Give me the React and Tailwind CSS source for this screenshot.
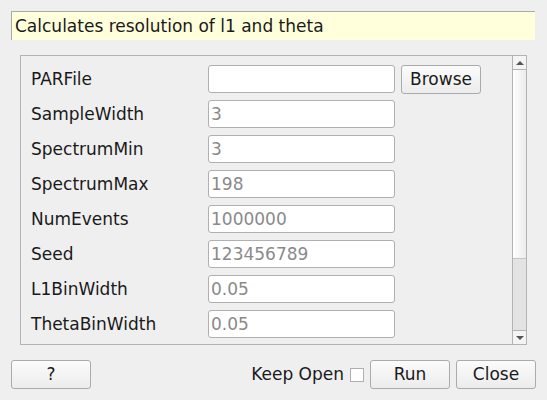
import React from "react";

const rows = [
  ["PARFile", "", true],
  ["SampleWidth", "3"],
  ["SpectrumMin", "3"],
  ["SpectrumMax", "198"],
  ["NumEvents", "1000000"],
  ["Seed", "123456789"],
  ["L1BinWidth", "0.05"],
  ["ThetaBinWidth", "0.05"],
];

function Btn({ children, className = "" }) {
  return (
    <div
      className={
        "flex h-[29px] w-[80px] items-center justify-center rounded-[3px] border border-[#ababab] bg-gradient-to-b from-[#fbfbfb] to-[#ececec] text-[17px] leading-none text-[#1a1a1a] " +
        className
      }
    >
      {children}
    </div>
  );
}

export default function App() {
  return (
    <div
      className="flex h-[400px] w-[547px] flex-col bg-[#efefef] text-[#1a1a1a]"
      style={{ fontFamily: '"DejaVu Sans", sans-serif' }}
    >
      <div className="ml-[11px] mr-[12px] mt-[11px] flex h-[29px] items-center border-l border-t border-[#a9a9a9] bg-[#ffffdc] pl-[3px] text-[17px] leading-none">
        Calculates resolution of l1 and theta
      </div>

      <div className="mx-[20px] mt-[15px] flex h-[290px] border border-[#b3b3b3]">
        <div className="flex flex-1 flex-col gap-[7px] overflow-hidden pl-[10px] pt-[9px]">
          {rows.map(([label, value, browse]) => (
            <div key={label} className="flex h-[28px] shrink-0 items-center">
              <div className="w-[177px] text-[17px] leading-none">{label}</div>
              <div className="flex h-[28px] w-[187px] items-center rounded-[3px] border border-[#b0b0b0] bg-white pl-[2px] text-[17px] leading-none text-[#8a8a8a]">
                {value}
              </div>
              {browse && <Btn className="ml-[6px] h-[28px]">Browse</Btn>}
            </div>
          ))}
        </div>
        <div className="flex w-[14px] flex-col border-l border-[#b3b3b3]">
          <div className="flex h-[14px] items-center justify-center border-b border-[#b3b3b3] bg-[#f4f4f4]">
            <div className="h-0 w-0 border-x-[4px] border-b-[4px] border-x-transparent border-b-[#555]" />
          </div>
          <div className="h-[188px] bg-gradient-to-r from-white to-[#ececec]" />
          <div className="flex-1 border-t border-[#c4c4c4] bg-[#e3e3e3]" />
          <div className="flex h-[14px] items-center justify-center border-t border-[#b3b3b3] bg-[#f4f4f4]">
            <div className="h-0 w-0 border-x-[4px] border-t-[4px] border-x-transparent border-t-[#555]" />
          </div>
        </div>
      </div>

      <div className="mx-[11px] mt-[15px] flex items-center">
        <Btn>?</Btn>
        <div className="flex-1" />
        <span className="text-[17px] leading-none">Keep Open</span>
        <div className="ml-[6px] h-[14px] w-[14px] border border-[#b0b0b0] bg-white" />
        <Btn className="ml-[6px] border-[#3a76a8] from-[#f3f6f9] to-[#dbe4ec]">Run</Btn>
        <Btn className="ml-[6px]">Close</Btn>
      </div>
    </div>
  );
}
